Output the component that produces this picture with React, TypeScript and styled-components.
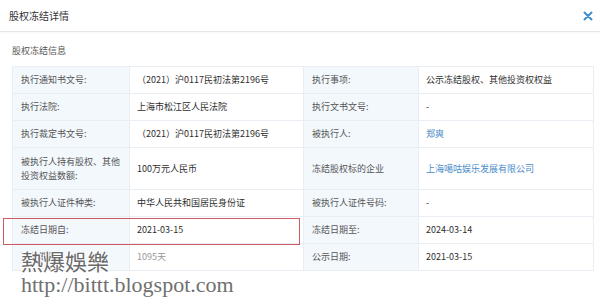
import styled, { createGlobalStyle } from "styled-components"

const GlobalStyle = createGlobalStyle`
    body {
        margin: 0;
        background: #fff;
        font-family: "Noto Sans CJK SC", "Noto Sans", sans-serif;
    }
`

const Page = styled.div`
    position: relative;
    width: 600px;
    height: 297px;
    overflow: hidden;
    background: #fff;
`

const Header = styled.div`
    height: 31px;
    display: flex;
    align-items: center;
    justify-content: space-between;
    padding: 0 7px 0 9px;
    border-bottom: 1px solid #e4e8ec;
    box-shadow: 0 1px 2px rgba(0, 0, 0, 0.04);
`

const Title = styled.span`
    font-size: 10px;
    color: #333;
`

const Close = styled.span`
    display: flex;
    width: 10px;
    height: 10px;
`

const Body = styled.div`
    padding: 13px 7px 0 12px;
`

const SectionTitle = styled.div`
    font-size: 9px;
    color: #555;
    height: 12px;
    line-height: 12px;
    margin-bottom: 9px;
`

const Table = styled.div`
    display: grid;
    grid-template-columns: 117px 174px 115px 175px;
    width: 581px;
    border-top: 1px solid #e8eef4;
    border-left: 1px solid #e8eef4;
`

const Cell = styled.div<{ $label?: boolean; $h?: number }>`
    height: ${(p) => p.$h || 27}px;
    box-sizing: border-box;
    display: flex;
    align-items: center;
    padding: 0 8px 0 ${(p) => (p.$label ? 8 : 7)}px;
    font-size: 9px;
    line-height: 14px;
    color: #2e2e2e;
    background: ${(p) => (p.$label ? "#f3f8fd" : "#fff")};
    border-right: 1px solid #e8eef4;
    border-bottom: 1px solid #e8eef4;
    ${(p) => p.$label && "color: #555;"}
`

const Link = styled.span`
    color: #4a8cc9;
`

const Muted = styled.span`
    color: #999;
`

const Highlight = styled.div`
    position: absolute;
    left: 3px;
    top: 218px;
    width: 297px;
    height: 27px;
    box-sizing: border-box;
    border: 1px solid #cc5a5e;
`

const Watermark = styled.div`
    position: absolute;
    left: 21px;
    top: 246px;
    color: #6a6a6a;
    text-shadow: 1px 1px 0 #fff, -1px -1px 0 #fff, 1px -1px 0 #fff, -1px 1px 0 #fff;
`

const MarkTitle = styled.div`
    font-family: "Noto Sans CJK TC", "Noto Sans CJK SC", sans-serif;
    font-size: 22px;
    line-height: 28px;
`

const MarkUrl = styled.div`
    font-family: "Liberation Serif", serif;
    font-size: 22px;
    line-height: 22px;
    margin-top: 0;
    color: #707070;
`

const rows: [string, React.ReactNode, string, React.ReactNode, number?][] = [
    ["执行通知书文号:", "（2021）沪0117民初法第2196号", "执行事项:", "公示冻结股权、其他投资权权益"],
    ["执行法院:", "上海市松江区人民法院", "执行文书文号:", "-"],
    ["执行裁定书文号:", "（2021）沪0117民初法第2196号", "被执行人:", <Link>郑爽</Link>],
    ["被执行人持有股权、其他投资权益数额:", "100万元人民币", "冻结股权标的企业", <Link>上海噶咕娱乐发展有限公司</Link>, 42],
    ["被执行人证件种类:", "中华人民共和国居民身份证", "被执行人证件号码:", "-"],
    ["冻结日期自:", "2021-03-15", "冻结日期至:", "2024-03-14"],
    ["冻结期限:", <Muted>1095天</Muted>, "公示日期:", "2021-03-15"],
]

const App = () => {
    return (
        <Page>
            <GlobalStyle />
            <Header>
                <Title>股权冻结详情</Title>
                <Close>
                    <svg width="10" height="10" viewBox="0 0 10 10">
                        <path d="M1.5 1.5 L8.5 8.5 M8.5 1.5 L1.5 8.5" stroke="#3f8ccc" strokeWidth="2" strokeLinecap="round" />
                    </svg>
                </Close>
            </Header>
            <Body>
                <SectionTitle>股权冻结信息</SectionTitle>
                <Table>
                    {rows.map((r, i) => (
                        <>
                            <Cell key={i + "a"} $label $h={r[4]}>{r[0]}</Cell>
                            <Cell key={i + "b"} $h={r[4]}>{r[1]}</Cell>
                            <Cell key={i + "c"} $label $h={r[4]}>{r[2]}</Cell>
                            <Cell key={i + "d"} $h={r[4]}>{r[3]}</Cell>
                        </>
                    ))}
                </Table>
            </Body>
            <Highlight />
            <Watermark>
                <MarkTitle>熱爆娛樂</MarkTitle>
                <MarkUrl>http://bittt.blogspot.com</MarkUrl>
            </Watermark>
        </Page>
    )
}

export default App
